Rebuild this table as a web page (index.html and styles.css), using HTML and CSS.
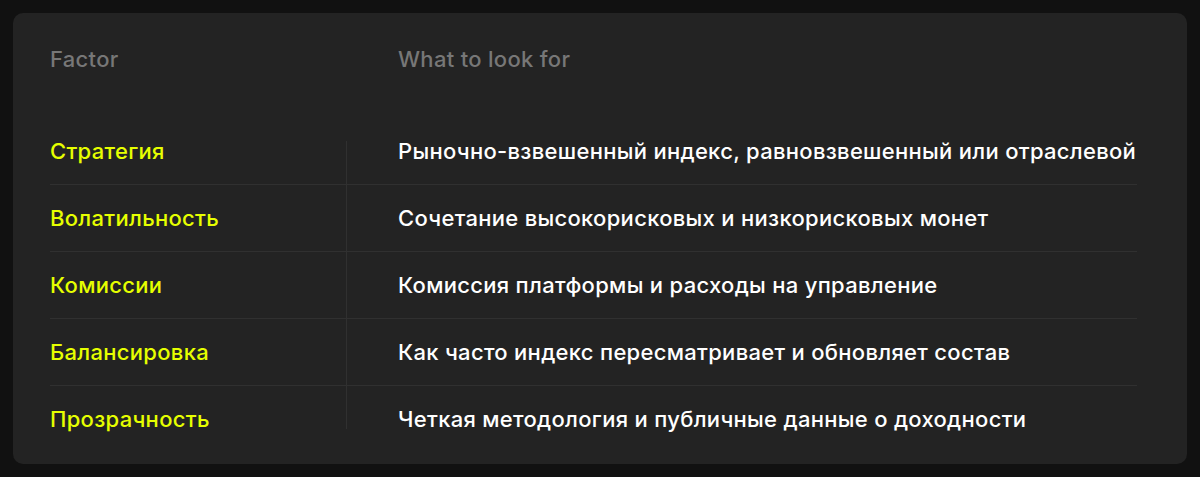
FILE: index.html
```html
<!DOCTYPE html>
<html lang="ru">
<head>
<meta charset="utf-8">
<link rel="stylesheet" href="styles.css">
</head>
<body>
<div class="card">
  <div class="table">
    <div class="head">
      <div class="hcell c1">Factor</div>
      <div class="hcell c2">What to look for</div>
    </div>
    <div class="body">
      <div class="row"><div class="cell c1 key">Стратегия</div><div class="cell c2">Рыночно-взвешенный индекс, равновзвешенный или отраслевой</div></div>
      <div class="row"><div class="cell c1 key">Волатильность</div><div class="cell c2">Сочетание высокорисковых и низкорисковых монет</div></div>
      <div class="row"><div class="cell c1 key">Комиссии</div><div class="cell c2">Комиссия платформы и расходы на управление</div></div>
      <div class="row"><div class="cell c1 key">Балансировка</div><div class="cell c2">Как часто индекс пересматривает и обновляет состав</div></div>
      <div class="row"><div class="cell c1 key">Прозрачность</div><div class="cell c2">Четкая методология и публичные данные о доходности</div></div>
    </div>
  </div>
</div>
</body>
</html>
```

FILE: styles.css
```css
html, body {
  margin: 0;
  padding: 0;
  background: #111111;
}
body {
  padding: 13px;
  font-family: Inter, "Noto Sans", sans-serif;
}
.card {
  background: #232323;
  border-radius: 10px;
  padding: 36px 50px 35px 37px;
  height: 451px;
  box-sizing: border-box;
}
.head {
  display: flex;
  font-size: 22px;
  font-weight: 500;
  letter-spacing: 0.3px;
  line-height: 20px;
  color: #777777;
  padding-bottom: 72px;
}
.c1 {
  width: 297px;
  box-sizing: border-box;
  flex: none;
}
.row {
  display: flex;
  border-bottom: 1px solid #303030;
}
.row:last-child {
  border-bottom: none;
}
.cell {
  font-size: 22px;
  font-weight: 500;
  letter-spacing: 0.3px;
  line-height: 20px;
  color: #ffffff;
  padding-top: 23px;
  padding-bottom: 23px;
  white-space: nowrap;
}
.c2 {
  padding-left: 51px;
}
.cell.c1 {
  border-right: 1px solid #303030;
}
.row:first-child .cell { padding-top: 0; }
.row:last-child .cell { padding-bottom: 0; }
.key {
  color: #e6ff00;
}
```
